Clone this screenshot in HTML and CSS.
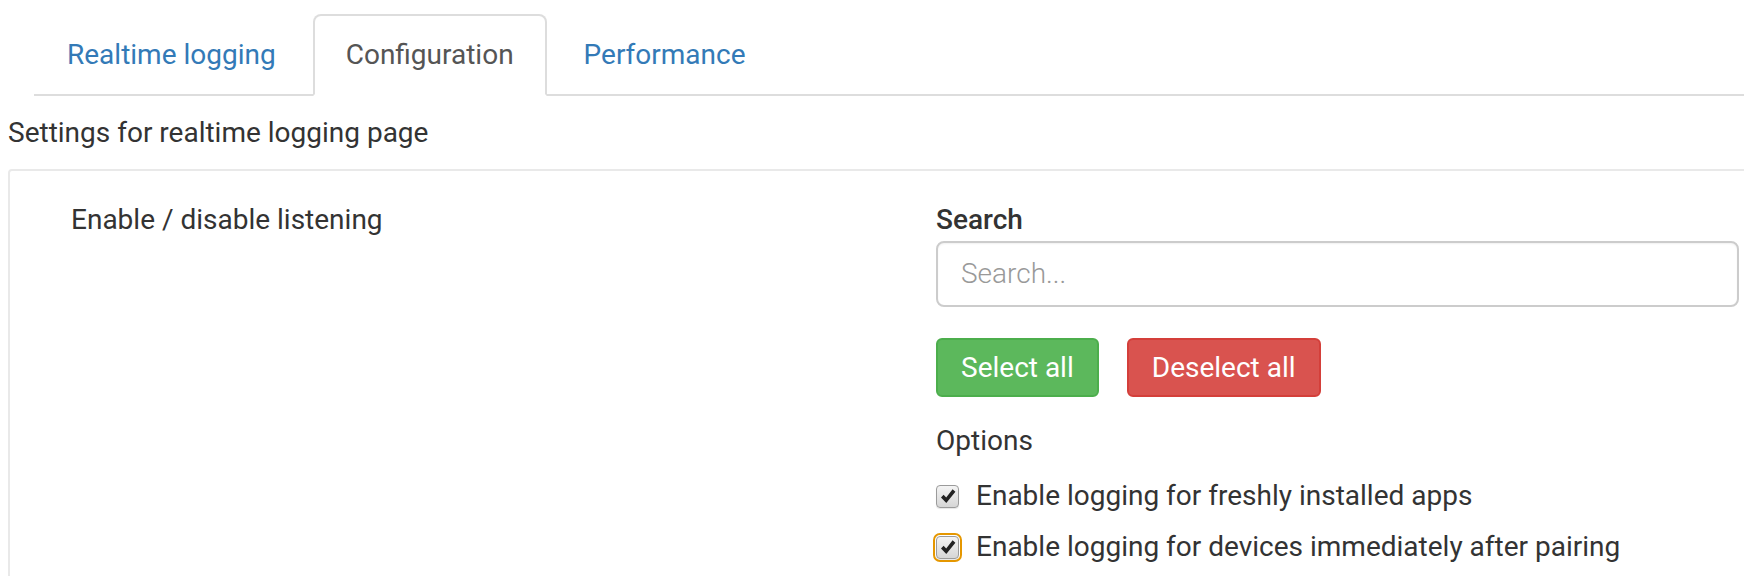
FILE: index.html
```html
<!DOCTYPE html>
<html lang="en">
<head>
<meta charset="utf-8">
<title>Configuration</title>
<link rel="stylesheet" href="styles.css">
</head>
<body>
  <ul class="nav">
    <li class="tab"><a class="tab-link">Realtime logging</a></li>
    <li class="tab active"><a class="tab-link">Configuration</a></li>
    <li class="tab"><a class="tab-link">Performance</a></li>
  </ul>

  <p class="intro">Settings for realtime logging page</p>

  <div class="panel">
    <div class="col-left">
      <div class="row-label">Enable / disable listening</div>
    </div>
    <div class="col-right">
      <label class="field-label">Search</label>
      <div class="input">Search...</div>
      <div class="buttons">
        <span class="btn btn-success">Select all</span>
        <span class="btn btn-danger">Deselect all</span>
      </div>
      <div class="options-title">Options</div>
      <div class="check-row">
        <span class="checkbox">
          <svg viewBox="0 0 22 22" width="22" height="22"><path d="M4 12.4 L6.6 9.8 L9.2 12.6 L15.6 4.2 L18.4 6.8 L9.3 18 Z" fill="#222"/></svg>
        </span>
        <span class="check-text">Enable logging for freshly installed apps</span>
      </div>
      <div class="check-row">
        <span class="checkbox focus">
          <svg viewBox="0 0 22 22" width="22" height="22"><path d="M4 12.4 L6.6 9.8 L9.2 12.6 L15.6 4.2 L18.4 6.8 L9.3 18 Z" fill="#222"/></svg>
        </span>
        <span class="check-text">Enable logging for devices immediately after pairing</span>
      </div>
    </div>
  </div>
</body>
</html>
```

FILE: styles.css
```css
html, body {
  margin: 0;
  padding: 0;
  background: #fff;
  overflow: hidden;
}

body {
  font-family: Roboto, "Liberation Sans", Arial, sans-serif;
  font-size: 28px;
  line-height: 40px;
  color: #333;
}

.nav {
  list-style: none;
  margin: 14px 0 0 34px;
  padding: 0;
  display: flex;
  border-bottom: 2px solid #ddd;
}

.tab {
  margin: 0 4px -2px 0;
}

.tab-link {
  display: block;
  padding: 19px 31px;
  border: 2px solid transparent;
  border-radius: 8px 8px 0 0;
  color: #337ab7;
  text-decoration: none;
}

.tab.active .tab-link {
  color: #555;
  background: #fff;
  border-color: #ddd;
  border-bottom-color: transparent;
}

.intro {
  margin: 17px 0 0 8px;
}

.panel {
  margin: 16px -40px 0 8px;
  border: 2px solid #e9e9e9;
  border-radius: 4px;
  padding: 29px 0 0 61px;
  display: grid;
  grid-template-columns: 865px 803px;
  height: 420px;
  box-sizing: border-box;
}

.field-label {
  display: block;
  font-weight: 500;
  margin-bottom: 1px;
}

.input {
  height: 66px;
  box-sizing: border-box;
  border: 2px solid #ccc;
  border-radius: 8px;
  padding: 11px 23px;
  color: #999;
  font-weight: 300;
  box-shadow: inset 0 1px 2px rgba(0, 0, 0, 0.06);
}

.buttons {
  display: flex;
  gap: 28px;
  margin-top: 31px;
}

.btn {
  display: block;
  height: 59px;
  box-sizing: border-box;
  line-height: 55px;
  padding: 0 23px;
  border: 2px solid;
  border-radius: 6px;
  color: #fff;
}

.btn-success {
  background: #5cb85c;
  border-color: #4cae4c;
}

.btn-danger {
  background: #d9534f;
  border-color: #d43f3a;
}

.options-title {
  margin-top: 24px;
}

.check-row {
  display: flex;
  align-items: center;
  margin-top: 15px;
}

.check-row + .check-row {
  margin-top: 11px;
}

.checkbox {
  width: 23px;
  height: 23px;
  box-sizing: border-box;
  border: 1px solid #9b9b9b;
  border-radius: 4px;
  background: linear-gradient(#f4f4f4, #d6d6d6);
  box-shadow: 0 1px 1px rgba(0, 0, 0, 0.1);
  display: flex;
  align-items: center;
  justify-content: center;
  margin-right: 17px;
  flex: none;
}

.checkbox svg {
  display: block;
  flex: none;
}

.checkbox.focus {
  outline: 2px solid #e59700;
  outline-offset: 1px;
}
```
